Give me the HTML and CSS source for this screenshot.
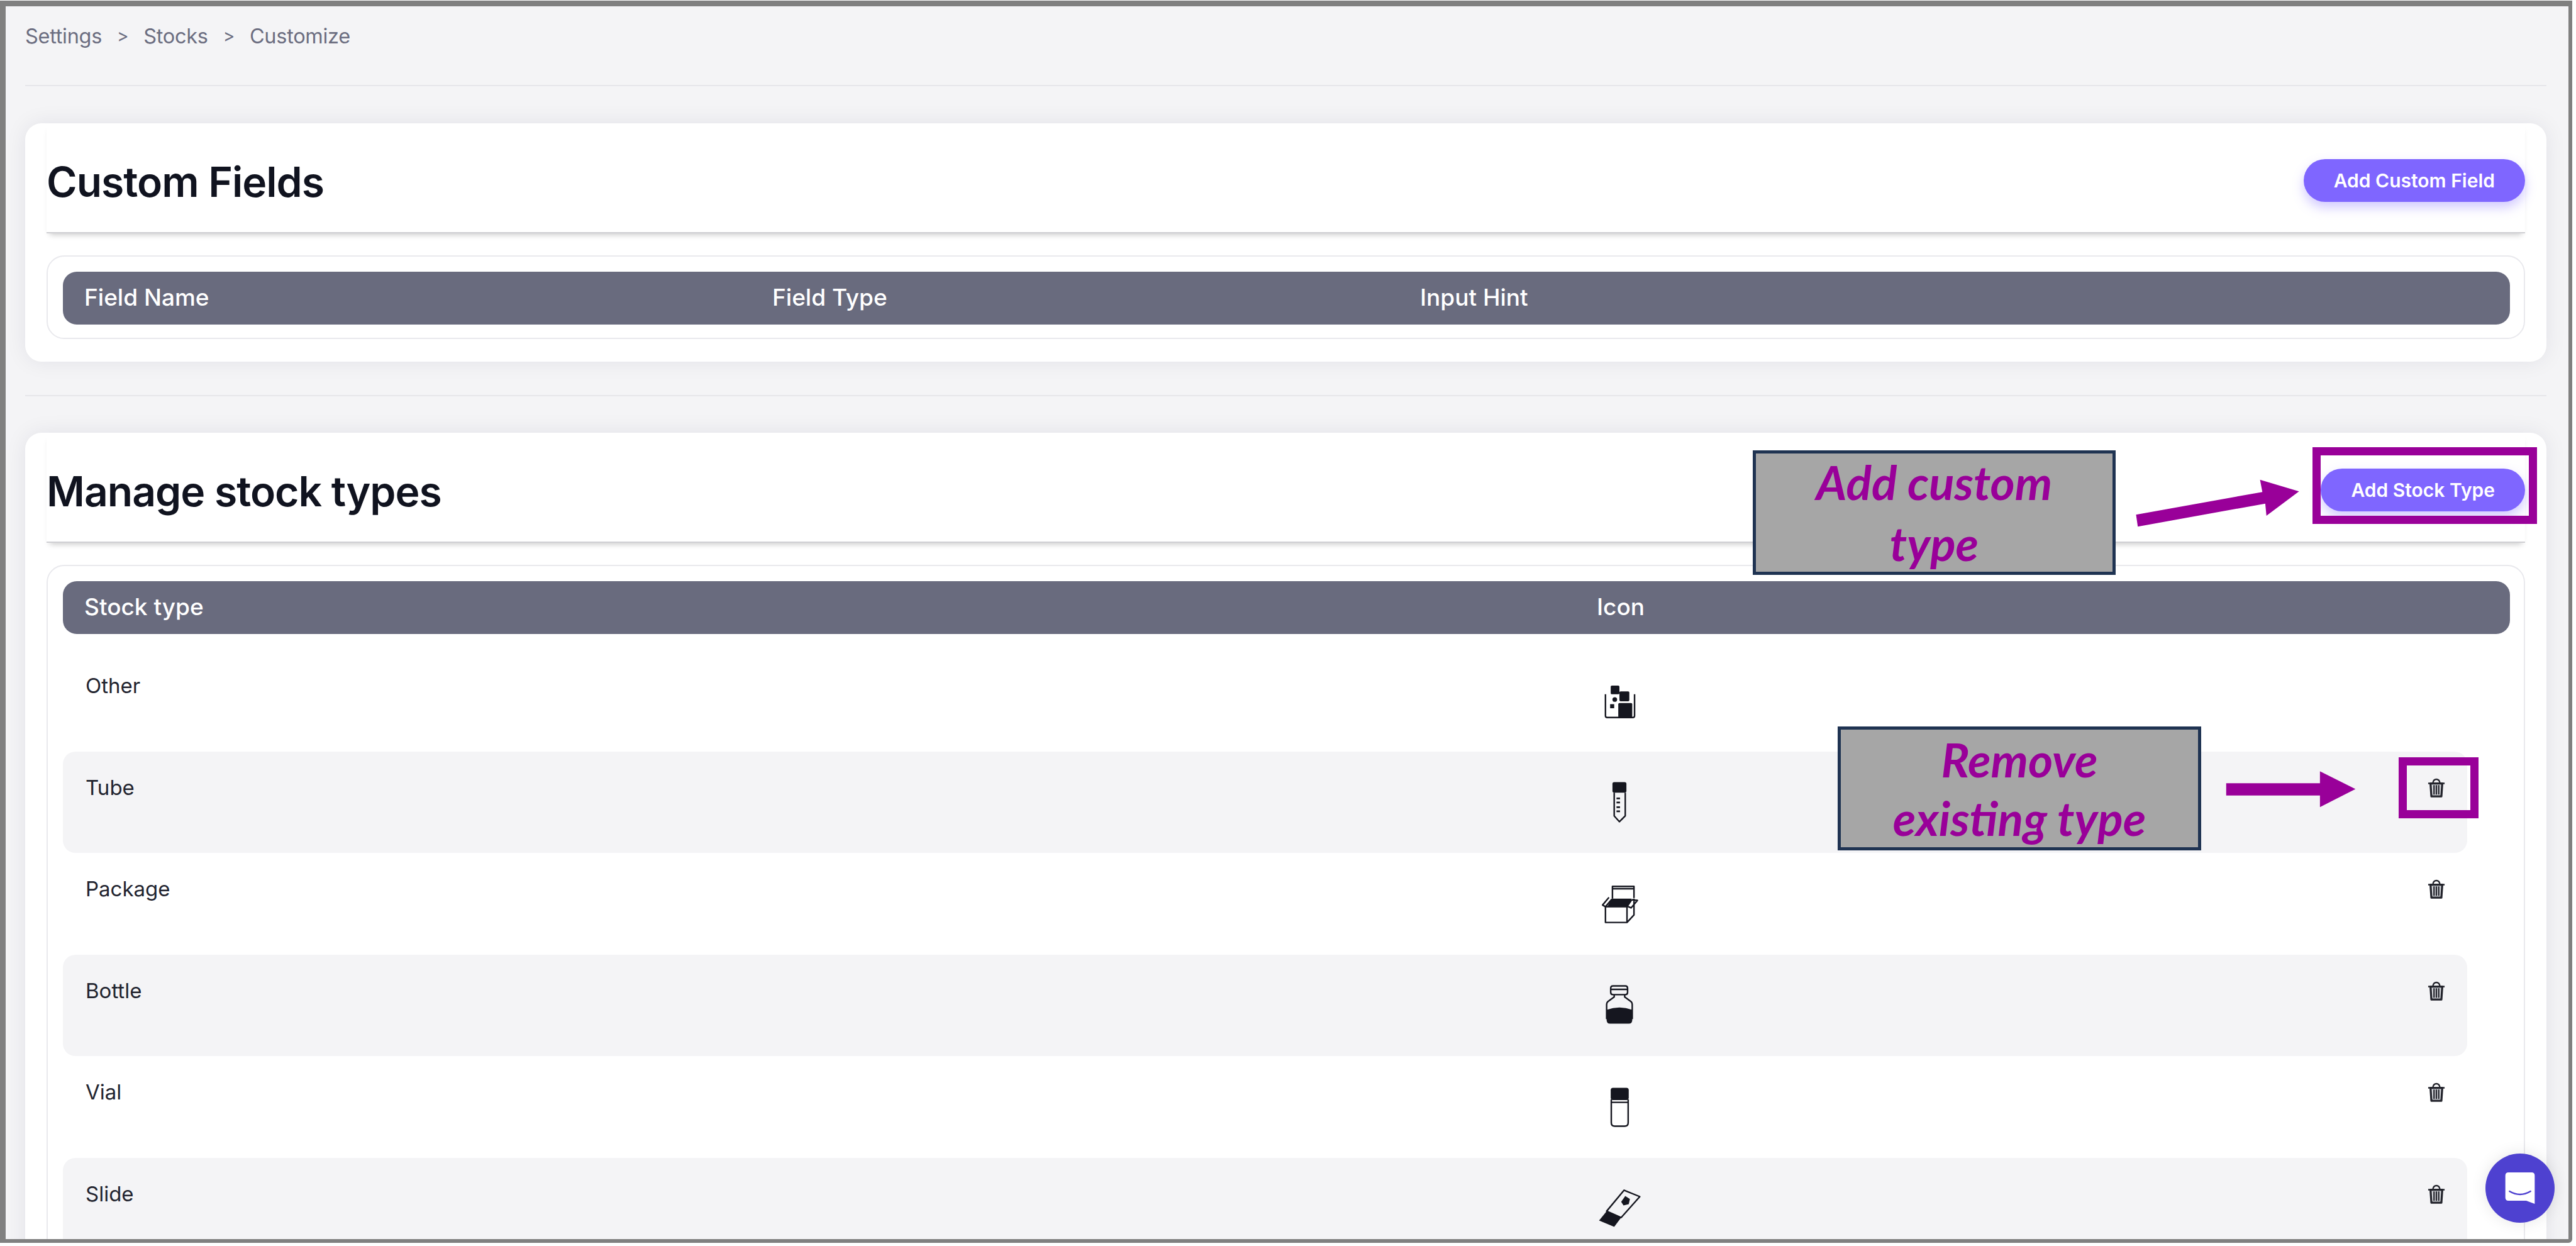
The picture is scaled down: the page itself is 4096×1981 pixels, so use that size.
FILE: index.html
```html
<!DOCTYPE html>
<html lang="en">
<head>
<meta charset="utf-8">
<title>Customize stocks</title>
<link rel="stylesheet" href="styles.css">
</head>
<body>
<div class="frame">
  <nav class="crumbs"><span>Settings</span><i>&gt;</i><span>Stocks</span><i>&gt;</i><span>Customize</span></nav>
  <div class="rule rule-top"></div>

  <section class="card card-fields">
    <header class="card-head">
      <h1>Custom Fields</h1>
      <button class="btn">Add Custom Field</button>
    </header>
    <div class="box box-fields">
      <div class="bar bar-fields"><span>Field Name</span><span>Field Type</span><span>Input Hint</span></div>
    </div>
  </section>

  <div class="rule rule-mid"></div>

  <section class="card card-types">
    <header class="card-head">
      <h1>Manage stock types</h1>
      <button class="btn">Add Stock Type</button>
    </header>
    <div class="box">
      <div class="bar bar-types"><span>Stock type</span><span>Icon</span></div>

      <div class="row">
        <span class="name">Other</span>
        <svg class="ico" viewBox="0 0 80 80"><path class="ln" d="M16 29V66q0 3 3 3H63q3 0 3-3V29"/><rect class="fill" x="25" y="14" width="15" height="15" rx="2"/><rect class="fill" x="40" y="24" width="17" height="17" rx="2"/><rect class="fill" x="38" y="44" width="24" height="25" rx="2"/><circle class="fill" cx="32" cy="38" r="4"/><rect class="fill" x="24" y="46" width="7" height="7"/></svg>
        <span></span>
      </div>

      <div class="row alt">
        <span class="name">Tube</span>
        <svg class="ico" viewBox="0 0 80 80"><path class="ln" d="M31 24V64L40 74 50 64V24"/><rect class="fill" x="28" y="6" width="24" height="18" rx="3"/><path class="tick" d="M35 34H41M35 41H41M35 49H41M35 56H41"/></svg>
        <svg class="trash" viewBox="0 0 30 34"><path class="t-line" d="M1 9H29M9 8Q10 2 15 2T21 8"/><path class="t-body" d="M5 9 6.500 31H23.500L25 9Z"/><path class="t-slat" d="M11 12V28M15 12V28M19 12V28"/></svg>
      </div>

      <div class="row">
        <span class="name">Package</span>
        <svg class="ico" viewBox="0 0 80 80"><path class="ln" d="M28 31V10H65V30M27 14H65"/><path class="fill" d="M27 31H61L53 45H19Z"/><path class="ln" d="M16 45H53V72H16ZM53 72 65 59V31M53 45 61 33M22 29 11 42 16 45 27 32M61 33 71 34 60 47 53 44"/></svg>
        <svg class="trash" viewBox="0 0 30 34"><path class="t-line" d="M1 9H29M9 8Q10 2 15 2T21 8"/><path class="t-body" d="M5 9 6.500 31H23.500L25 9Z"/><path class="t-slat" d="M11 12V28M15 12V28M19 12V28"/></svg>
      </div>

      <div class="row alt">
        <span class="name">Bottle</span>
        <svg class="ico" viewBox="0 0 80 80"><path class="ln" d="M29 7H50Q54 7 54 11V18Q54 22 50 22H29Q25 22 25 18V11Q25 7 29 7ZM26 13H53M31 22V26L20 34Q18 36 18 39V64M49 22V26L60 34Q62 36 62 39V64"/><path class="fill" d="M18 48Q40 40 62 48V66Q62 72 56 72H24Q18 72 18 66Z"/></svg>
        <svg class="trash" viewBox="0 0 30 34"><path class="t-line" d="M1 9H29M9 8Q10 2 15 2T21 8"/><path class="t-body" d="M5 9 6.500 31H23.500L25 9Z"/><path class="t-slat" d="M11 12V28M15 12V28M19 12V28"/></svg>
      </div>

      <div class="row">
        <span class="name">Vial</span>
        <svg class="ico" viewBox="0 0 80 80"><path class="ln" d="M26 27V67Q26 73 32 73H49Q55 73 55 67V27M26 32H55"/><rect class="fill" x="25" y="7" width="31" height="21" rx="4"/></svg>
        <svg class="trash" viewBox="0 0 30 34"><path class="t-line" d="M1 9H29M9 8Q10 2 15 2T21 8"/><path class="t-body" d="M5 9 6.500 31H23.500L25 9Z"/><path class="t-slat" d="M11 12V28M15 12V28M19 12V28"/></svg>
      </div>

      <div class="row alt">
        <span class="name">Slide</span>
        <svg class="ico" viewBox="0 0 80 80"><path class="ln" d="M48 9 75 20 43 56 18 45Z"/><path class="fill" d="M18 45 43 56 31 72 5 61Z"/><path class="fill" d="M50 19 58 24 56 33 47 35 43 29Z"/></svg>
        <svg class="trash" viewBox="0 0 30 34"><path class="t-line" d="M1 9H29M9 8Q10 2 15 2T21 8"/><path class="t-body" d="M5 9 6.500 31H23.500L25 9Z"/><path class="t-slat" d="M11 12V28M15 12V28M19 12V28"/></svg>
      </div>
    </div>
  </section>

  <div class="note note-add">Add custom<br>type</div>
  <svg class="arrow arrow-add" viewBox="0 0 290 90"><polygon points="8,64 225,25 221,4 288,24 232,66 230,45 11,84.500"/></svg>
  <div class="mark mark-add"></div>

  <div class="note note-remove">Remove<br>existing type</div>
  <svg class="arrow arrow-remove" viewBox="0 0 230 70"><polygon points="3,25 164,25 164,4.500 225,35 164,66 164,46 3,46"/></svg>
  <div class="mark mark-remove"></div>

  <div class="chat"><svg viewBox="0 0 60 64"><path class="chat-b" d="M8 2H52Q58 2 58 8V62L42 56H8Q2 56 2 50V8Q2 2 8 2Z"/><path class="chat-s" d="M10 38Q30 50 50 38"/></svg></div>
</div>
</body>
</html>
```
FILE: styles.css
```css
* { box-sizing: border-box; }
html, body { margin: 0; padding: 0; background: #fff; overflow: hidden; }
body { width: 4096px; height: 1981px; font-family: Inter, "Noto Sans", sans-serif; }

.frame {
  position: relative;
  width: 4090px;
  height: 1975px;
  margin-top: 1px;
  padding: 27px 35px 0 31px;
  border-style: solid;
  border-color: #808080;
  border-width: 9px 6px 6px 9px;
  border-radius: 0 0 6px 0;
  background: #f4f4f6;
  overflow: hidden;
}

.crumbs {
  display: flex;
  align-items: center;
  height: 40px;
  font-size: 32.5px;
  letter-spacing: -.3px;
  color: #6b6d80;
}
.crumbs i { font-style: normal; font-size: 28px; margin: 0 24px; }

.rule { height: 2px; background: #e6e6ea; }
.rule-top { margin-top: 58px; }
.rule-mid { margin-top: 53px; }

.card {
  background: #fff;
  border-radius: 26px;
  padding: 0 34px;
  box-shadow: 0 0 34px rgba(30, 30, 60, .08);
}
.card-fields { margin-top: 59px; height: 379px; }
.card-types { margin-top: 58px; height: 1400px; }

.card-head {
  display: flex;
  justify-content: space-between;
  align-items: center;
  height: 175px;
  padding-top: 8px;
  border-bottom: 2px solid #cfcfd3;
  box-shadow: 0 7px 9px -5px rgba(0, 0, 0, .22);
}
.card-head h1 {
  margin: 4px 0 0;
  font-size: 66px;
  font-weight: 600;
  letter-spacing: -1px;
  color: #10131f;
}
.btn {
  height: 68px;
  padding: 0 48px;
  border: 0;
  border-radius: 34px;
  background: #7f66ff;
  color: #fff;
  font: 600 30px Inter, "Noto Sans", sans-serif;
  box-shadow: 0 9px 18px rgba(127, 102, 255, .35);
}

.box {
  margin-top: 35px;
  padding: 24px 22px 24px 24px;
  border: 2px solid #e9e9ed;
  border-radius: 28px;
  background: #fff;
}
.box-fields { height: 133px; }

.bar {
  display: grid;
  align-items: center;
  height: 84px;
  padding: 0 0 3px 34px;
  border-radius: 22px;
  background: #696b7e;
  color: #fff;
  font-size: 37px;
  font-weight: 500;
}
.bar-fields { grid-template-columns: 1094px 1030px 1fr; }
.bar-types { grid-template-columns: 2405px 1fr; margin-bottom: 25px; }

.row {
  display: grid;
  grid-template-columns: 2402px 74px 1fr 28px;
  align-items: start;
  height: 161.5px;
  margin-right: 68px;
  padding: 0 35px 0 36px;
  border-radius: 20px;
  color: #22242f;
  font-size: 33px;
}
.row.alt { background: #f4f4f6; }
.name { margin-top: 37px; line-height: 40px; }
.ico { grid-column: 2; width: 74px; height: 74px; align-self: center; overflow: visible; }
.trash { grid-column: 4; width: 28px; height: 32px; margin-top: 42px; }

.ln { fill: none; stroke: #15161f; stroke-width: 2.6; stroke-linejoin: round; }
.fill { fill: #15161f; }
.tick { fill: none; stroke: #15161f; stroke-width: 3; }
.t-line { fill: none; stroke: #23242c; stroke-width: 2.5; }
.t-body { fill: #d6d8dc; stroke: #23242c; stroke-width: 3.5; stroke-linejoin: round; }
.t-slat { fill: none; stroke: #23242c; stroke-width: 2.4; }

.note {
  position: absolute;
  display: flex;
  flex-direction: column;
  justify-content: center;
  text-align: center;
  border: 5px solid #1f3352;
  background: #a6a6a6;
  color: #990099;
  font-family: Lato, "Open Sans", sans-serif;
  font-weight: 700;
  font-style: italic;
  font-size: 75px;
  line-height: 97px;
}
.note-add { left: 2778px; top: 706px; width: 577px; height: 198px; }
.note-remove { left: 2913px; top: 1145px; width: 578px; height: 197px; line-height: 93px; }

.mark { position: absolute; border: 13px solid #990099; }
.mark-add { left: 3668px; top: 701px; width: 357px; height: 122px; }
.mark-remove { left: 3805px; top: 1194px; width: 127px; height: 97px; }

.arrow { position: absolute; fill: #990099; }
.arrow-add { left: 3380px; top: 749px; width: 268.5px; height: 83.3px; }
.arrow-remove { left: 3528px; top: 1212px; width: 213px; height: 65px; }

.chat {
  position: absolute;
  left: 3943px;
  top: 1824px;
  display: flex;
  align-items: center;
  justify-content: center;
  width: 110px;
  height: 110px;
  border-radius: 50%;
  background: #4e41d0;
  box-shadow: 0 0 24px rgba(0, 0, 0, .1);
}
.chat svg { width: 50px; height: 54px; }
.chat-b { fill: #fff; }
.chat-s { fill: none; stroke: #4e41d0; stroke-width: 3; stroke-linecap: round; }
```
